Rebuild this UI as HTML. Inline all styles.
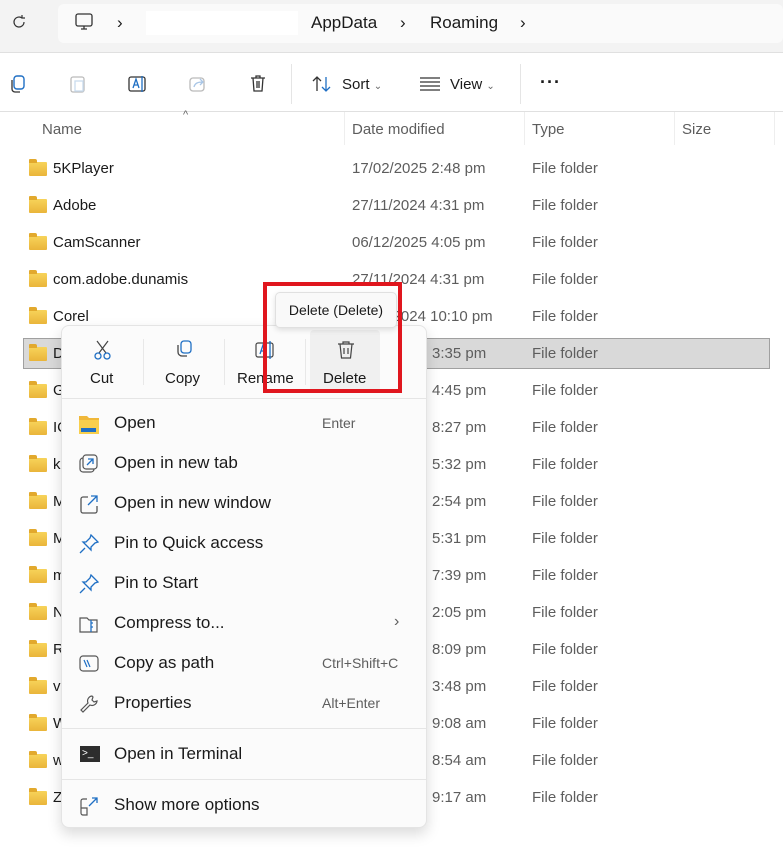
<!DOCTYPE html>
<html><head><style>
*{margin:0;padding:0;box-sizing:border-box}
body{width:783px;height:851px;background:#fff;font-family:"Liberation Sans",sans-serif;position:relative;overflow:hidden;color:#1a1a1a}
.abs{position:absolute}
.t{position:absolute;font-size:15px;white-space:nowrap}
.fold{position:absolute;left:29px;width:18px;height:14px;background:linear-gradient(#f7d35a,#eab53a);border-radius:1px}
.fold:before{content:"";position:absolute;left:0;top:-3px;width:8px;height:4px;background:#e2a92d;border-radius:1px 2px 0 0}
.gray{color:#5d5d5d}
.mi{position:absolute;left:114px;font-size:17px;color:#1a1a1a}
.sc{position:absolute;font-size:14px;color:#5d5d5d}
</style></head><body>
<div class="abs" style="left:0;top:0;width:783px;height:53px;background:#f3f3f3;border-bottom:1px solid #e0e0e0"></div>
<div class="abs" style="left:58px;top:4px;width:725px;height:39px;background:#fafafa;border-radius:6px"></div>
<svg class="abs" style="left:11px;top:14px" width="16" height="16" viewBox="0 0 16 16"><path d="M13 8a5 5 0 1 1-2-4M11 1v3h3" fill="none" stroke="#333" stroke-width="1.2"/></svg>
<svg class="abs" style="left:74px;top:12px" width="20" height="20" viewBox="0 0 20 20"><rect x="2" y="2" width="16" height="12" rx="2" fill="none" stroke="#333" stroke-width="1.3"/><path d="M7 17h6M10 14v3" stroke="#333" stroke-width="1.3"/></svg>
<div class="t" style="left:117px;top:13px;font-size:17px">›</div>
<div class="abs" style="left:146px;top:11px;width:152px;height:24px;background:#fff"></div>
<div class="t" style="left:311px;top:13px;font-size:17px">AppData</div>
<div class="t" style="left:400px;top:13px;font-size:17px">›</div>
<div class="t" style="left:430px;top:13px;font-size:17px">Roaming</div>
<div class="t" style="left:520px;top:13px;font-size:17px">›</div>
<!-- toolbar -->
<svg class="abs" style="left:8px;top:74px" width="20" height="20"><rect x="6" y="2" width="10" height="13" rx="3" fill="none" stroke="#1f6fc4" stroke-width="1.4"/><path d="M4 6v9a3 3 0 0 0 3 3h5" fill="none" stroke="#333" stroke-width="1.3"/></svg>
<svg class="abs" style="left:68px;top:74px" width="20" height="20"><rect x="3" y="3" width="13" height="15" rx="2" fill="none" stroke="#bbb" stroke-width="1.3"/><rect x="7" y="7" width="8" height="10" fill="none" stroke="#c9dcee" stroke-width="1.3"/></svg>
<svg class="abs" style="left:127px;top:74px" width="22" height="20"><rect x="2" y="3" width="16" height="14" rx="2" fill="none" stroke="#333" stroke-width="1.3"/><path d="M6 14l3-9 3 9M7 11h4M15 2v16" fill="none" stroke="#1f6fc4" stroke-width="1.3"/></svg>
<svg class="abs" style="left:188px;top:74px" width="20" height="20"><rect x="2" y="4" width="14" height="13" rx="3" fill="none" stroke="#bbb" stroke-width="1.3"/><path d="M6 13c1-4 4-5 9-5M12 5l3 3-3 3" fill="none" stroke="#a9c6e6" stroke-width="1.3"/></svg>
<svg class="abs" style="left:248px;top:73px" width="20" height="22"><path d="M3 5h14M8 5V3h4v2M5 5l1 13h8l1-13M9 8v7M11 8v7" fill="none" stroke="#333" stroke-width="1.3"/></svg>
<div class="abs" style="left:291px;top:64px;width:1px;height:40px;background:#e5e5e5"></div>
<svg class="abs" style="left:311px;top:74px" width="22" height="20"><path d="M6 17V3M2 7l4-4 4 4" fill="none" stroke="#333" stroke-width="1.3"/><path d="M15 3v14M11 13l4 4 4-4" fill="none" stroke="#1f6fc4" stroke-width="1.3"/></svg>
<div class="t" style="left:342px;top:76px">Sort <span style="font-size:10px;color:#666">⌄</span></div>
<svg class="abs" style="left:419px;top:76px" width="22" height="16"><path d="M1 2h20M1 6h20M1 10h20M1 14h20" stroke="#333" stroke-width="1.2"/></svg>
<div class="t" style="left:450px;top:76px">View <span style="font-size:10px;color:#666">⌄</span></div>
<div class="abs" style="left:520px;top:64px;width:1px;height:40px;background:#e5e5e5"></div>
<div class="t" style="left:540px;top:72px;font-size:18px;font-weight:bold;letter-spacing:1px">···</div>
<div class="abs" style="left:0;top:111px;width:783px;height:1px;background:#e0e0e0"></div>
<!-- header -->
<div class="t" style="left:183px;top:109px;font-size:11px;color:#666">^</div>
<div class="t gray" style="left:42px;top:121px">Name</div>
<div class="abs" style="left:344px;top:112px;width:1px;height:33px;background:#eee"></div>
<div class="t gray" style="left:352px;top:121px">Date modified</div>
<div class="abs" style="left:524px;top:112px;width:1px;height:33px;background:#eee"></div>
<div class="t gray" style="left:532px;top:121px">Type</div>
<div class="abs" style="left:674px;top:112px;width:1px;height:33px;background:#eee"></div>
<div class="t gray" style="left:682px;top:121px">Size</div>
<div class="abs" style="left:774px;top:112px;width:1px;height:33px;background:#eee"></div>
<!-- selected row -->
<div class="abs" style="left:23px;top:338px;width:747px;height:31px;background:#d9d9d9;border:1px solid #a0a0a0"></div>
<div id="rows"></div>
<script></script>
<!-- rows -->
<div class="fold" style="top:162px"></div><div class="t" style="left:53px;top:160px">5KPlayer</div><div class="t gray" style="left:352px;top:160px">17/02/2025 2:48 pm</div><div class="t gray" style="left:532px;top:160px">File folder</div>
<div class="fold" style="top:199px"></div><div class="t" style="left:53px;top:197px">Adobe</div><div class="t gray" style="left:352px;top:197px">27/11/2024 4:31 pm</div><div class="t gray" style="left:532px;top:197px">File folder</div>
<div class="fold" style="top:236px"></div><div class="t" style="left:53px;top:234px">CamScanner</div><div class="t gray" style="left:352px;top:234px">06/12/2025 4:05 pm</div><div class="t gray" style="left:532px;top:234px">File folder</div>
<div class="fold" style="top:273px"></div><div class="t" style="left:53px;top:271px">com.adobe.dunamis</div><div class="t gray" style="left:352px;top:271px">27/11/2024 4:31 pm</div><div class="t gray" style="left:532px;top:271px">File folder</div>
<div class="fold" style="top:310px"></div><div class="t" style="left:53px;top:308px">Corel</div><div class="t gray" style="left:352px;top:308px">27/11/2024 10:10 pm</div><div class="t gray" style="left:532px;top:308px">File folder</div>
<div class="fold" style="top:347px"></div><div class="t" style="left:53px;top:345px">D</div><div class="t gray" style="left:432px;top:345px">3:35 pm</div><div class="t gray" style="left:532px;top:345px">File folder</div>
<div class="fold" style="top:384px"></div><div class="t" style="left:53px;top:382px">G</div><div class="t gray" style="left:432px;top:382px">4:45 pm</div><div class="t gray" style="left:532px;top:382px">File folder</div>
<div class="fold" style="top:421px"></div><div class="t" style="left:53px;top:419px">IC</div><div class="t gray" style="left:432px;top:419px">8:27 pm</div><div class="t gray" style="left:532px;top:419px">File folder</div>
<div class="fold" style="top:458px"></div><div class="t" style="left:53px;top:456px">k</div><div class="t gray" style="left:432px;top:456px">5:32 pm</div><div class="t gray" style="left:532px;top:456px">File folder</div>
<div class="fold" style="top:495px"></div><div class="t" style="left:53px;top:493px">M</div><div class="t gray" style="left:432px;top:493px">2:54 pm</div><div class="t gray" style="left:532px;top:493px">File folder</div>
<div class="fold" style="top:532px"></div><div class="t" style="left:53px;top:530px">M</div><div class="t gray" style="left:432px;top:530px">5:31 pm</div><div class="t gray" style="left:532px;top:530px">File folder</div>
<div class="fold" style="top:569px"></div><div class="t" style="left:53px;top:567px">m</div><div class="t gray" style="left:432px;top:567px">7:39 pm</div><div class="t gray" style="left:532px;top:567px">File folder</div>
<div class="fold" style="top:606px"></div><div class="t" style="left:53px;top:604px">N</div><div class="t gray" style="left:432px;top:604px">2:05 pm</div><div class="t gray" style="left:532px;top:604px">File folder</div>
<div class="fold" style="top:643px"></div><div class="t" style="left:53px;top:641px">R</div><div class="t gray" style="left:432px;top:641px">8:09 pm</div><div class="t gray" style="left:532px;top:641px">File folder</div>
<div class="fold" style="top:680px"></div><div class="t" style="left:53px;top:678px">v</div><div class="t gray" style="left:432px;top:678px">3:48 pm</div><div class="t gray" style="left:532px;top:678px">File folder</div>
<div class="fold" style="top:717px"></div><div class="t" style="left:53px;top:715px">W</div><div class="t gray" style="left:432px;top:715px">9:08 am</div><div class="t gray" style="left:532px;top:715px">File folder</div>
<div class="fold" style="top:754px"></div><div class="t" style="left:53px;top:752px">w</div><div class="t gray" style="left:432px;top:752px">8:54 am</div><div class="t gray" style="left:532px;top:752px">File folder</div>
<div class="fold" style="top:791px"></div><div class="t" style="left:53px;top:789px">Z</div><div class="t gray" style="left:432px;top:789px">9:17 am</div><div class="t gray" style="left:532px;top:789px">File folder</div>
<!-- menu -->
<div class="abs" style="left:61px;top:325px;width:366px;height:503px;background:#fbfbfb;border:1px solid #e4e4e4;border-radius:8px;box-shadow:0 6px 14px rgba(0,0,0,.15)"></div>
<div class="abs" style="left:310px;top:330px;width:70px;height:62px;background:#f0f0f0;border-radius:4px"></div>
<div class="abs" style="left:143px;top:339px;width:1px;height:46px;background:#e8e8e8"></div>
<div class="abs" style="left:224px;top:339px;width:1px;height:46px;background:#e8e8e8"></div>
<div class="abs" style="left:305px;top:339px;width:1px;height:46px;background:#e8e8e8"></div>
<svg class="abs" style="left:92px;top:339px" width="22" height="22"><path d="M5 2l9 12M16 2l-9 12" stroke="#444" stroke-width="1.2"/><circle cx="6" cy="17" r="3" fill="none" stroke="#1f6fc4" stroke-width="1.3"/><circle cx="15" cy="17" r="3" fill="none" stroke="#1f6fc4" stroke-width="1.3"/></svg>
<div class="t" style="left:90px;top:370px">Cut</div>
<svg class="abs" style="left:173px;top:339px" width="22" height="22"><rect x="8" y="2" width="10" height="12" rx="3" fill="none" stroke="#1f6fc4" stroke-width="1.3"/><path d="M5 6v7a4 4 0 0 0 4 4h5" fill="none" stroke="#444" stroke-width="1.3"/></svg>
<div class="t" style="left:165px;top:370px">Copy</div>
<svg class="abs" style="left:254px;top:339px" width="22" height="22"><rect x="2" y="4" width="17" height="14" rx="2" fill="none" stroke="#444" stroke-width="1.2"/><path d="M6 15l3-9 3 9M7 12h4M16 2v18" fill="none" stroke="#1f6fc4" stroke-width="1.3"/></svg>
<div class="t" style="left:237px;top:370px">Rename</div>
<svg class="abs" style="left:335px;top:339px" width="22" height="22"><path d="M3 5h16M8 5V3h6v2M5 5l1.5 14h9L17 5M9 9v6M13 9v6" fill="none" stroke="#444" stroke-width="1.2"/></svg>
<div class="t" style="left:323px;top:370px">Delete</div>
<div class="abs" style="left:62px;top:398px;width:364px;height:1px;background:#e5e5e5"></div>
<!-- items -->
<svg class="abs" style="left:79px;top:414px" width="20" height="20"><path d="M0 2h8l2 2h10v16H0z" fill="#f0b83a"/><rect x="0" y="6" width="20" height="14" fill="#f8cf4d"/><rect x="2" y="14" width="15" height="4" fill="#1f6fc4"/></svg>
<div class="mi" style="top:413px">Open</div><div class="sc" style="left:322px;top:415px">Enter</div>
<svg class="abs" style="left:79px;top:454px" width="20" height="20"><rect x="1" y="4" width="14" height="14" rx="3" fill="none" stroke="#555" stroke-width="1.2"/><rect x="4" y="1" width="14" height="14" rx="3" fill="#fbfbfb" stroke="#555" stroke-width="1.2"/><path d="M8 11l6-6M9 5h5v5" fill="none" stroke="#1f6fc4" stroke-width="1.3"/></svg>
<div class="mi" style="top:453px">Open in new tab</div>
<svg class="abs" style="left:79px;top:494px" width="20" height="20"><path d="M9 3H4a2 2 0 0 0-2 2v12a2 2 0 0 0 2 2h12a2 2 0 0 0 2-2v-5" fill="none" stroke="#555" stroke-width="1.3"/><path d="M9 11l9-9M12 2h6v6" fill="none" stroke="#1f6fc4" stroke-width="1.3"/></svg>
<div class="mi" style="top:493px">Open in new window</div>
<svg class="abs" style="left:79px;top:534px" width="20" height="20"><path d="M12 1l7 7-3 1-4 4 0 3-8-8 3 0 4-4zM6 14l-5 5" fill="none" stroke="#1f6fc4" stroke-width="1.3"/></svg>
<div class="mi" style="top:533px">Pin to Quick access</div>
<svg class="abs" style="left:79px;top:574px" width="20" height="20"><path d="M12 1l7 7-3 1-4 4 0 3-8-8 3 0 4-4zM6 14l-5 5" fill="none" stroke="#1f6fc4" stroke-width="1.3"/></svg>
<div class="mi" style="top:573px">Pin to Start</div>
<svg class="abs" style="left:79px;top:614px" width="20" height="20"><path d="M1 4h7l2 2h8v12H1z" fill="none" stroke="#555" stroke-width="1.2"/><path d="M12 6v12M12 9h2M12 13h2" stroke="#1f6fc4" stroke-width="1.3"/></svg>
<div class="mi" style="top:613px">Compress to...</div><div class="sc" style="left:394px;top:613px;font-size:16px">›</div>
<svg class="abs" style="left:79px;top:654px" width="20" height="20"><rect x="1" y="2" width="18" height="15" rx="3" fill="none" stroke="#555" stroke-width="1.2"/><path d="M5 6l3 7M8 6l3 7" stroke="#1f6fc4" stroke-width="1.2"/></svg>
<div class="mi" style="top:653px">Copy as path</div><div class="sc" style="left:322px;top:655px">Ctrl+Shift+C</div>
<svg class="abs" style="left:79px;top:694px" width="20" height="20"><path d="M13 2a5 5 0 0 0-4 7L2 16l2 2 7-7a5 5 0 0 0 7-4l-3 1-2-2 1-3z" fill="none" stroke="#555" stroke-width="1.2"/></svg>
<div class="mi" style="top:693px">Properties</div><div class="sc" style="left:322px;top:695px">Alt+Enter</div>
<div class="abs" style="left:62px;top:728px;width:364px;height:1px;background:#e5e5e5"></div>
<div class="abs" style="left:80px;top:746px;width:20px;height:16px;background:#2d2d2d;color:#fff;font-size:10px;line-height:16px;padding-left:2px">&gt;_</div>
<div class="mi" style="top:744px">Open in Terminal</div>
<div class="abs" style="left:62px;top:779px;width:364px;height:1px;background:#e5e5e5"></div>
<svg class="abs" style="left:79px;top:796px" width="20" height="20"><path d="M8 3H4a2 2 0 0 0-2 2v12a2 2 0 0 0 2 2h4v-7H2" fill="none" stroke="#555" stroke-width="1.2"/><path d="M10 10l8-8M13 2h5v5" fill="none" stroke="#1f6fc4" stroke-width="1.3"/></svg>
<div class="mi" style="top:795px">Show more options</div>
<!-- tooltip -->
<div class="abs" style="left:275px;top:292px;width:122px;height:36px;background:#f9f9f9;border:1px solid #e0e0e0;border-radius:5px;box-shadow:0 2px 6px rgba(0,0,0,.12);font-size:14px;line-height:34px;text-align:center">Delete (Delete)</div>
<div class="abs" style="left:263px;top:282px;width:139px;height:111px;border:4px solid #e0161e"></div>
</body></html>
